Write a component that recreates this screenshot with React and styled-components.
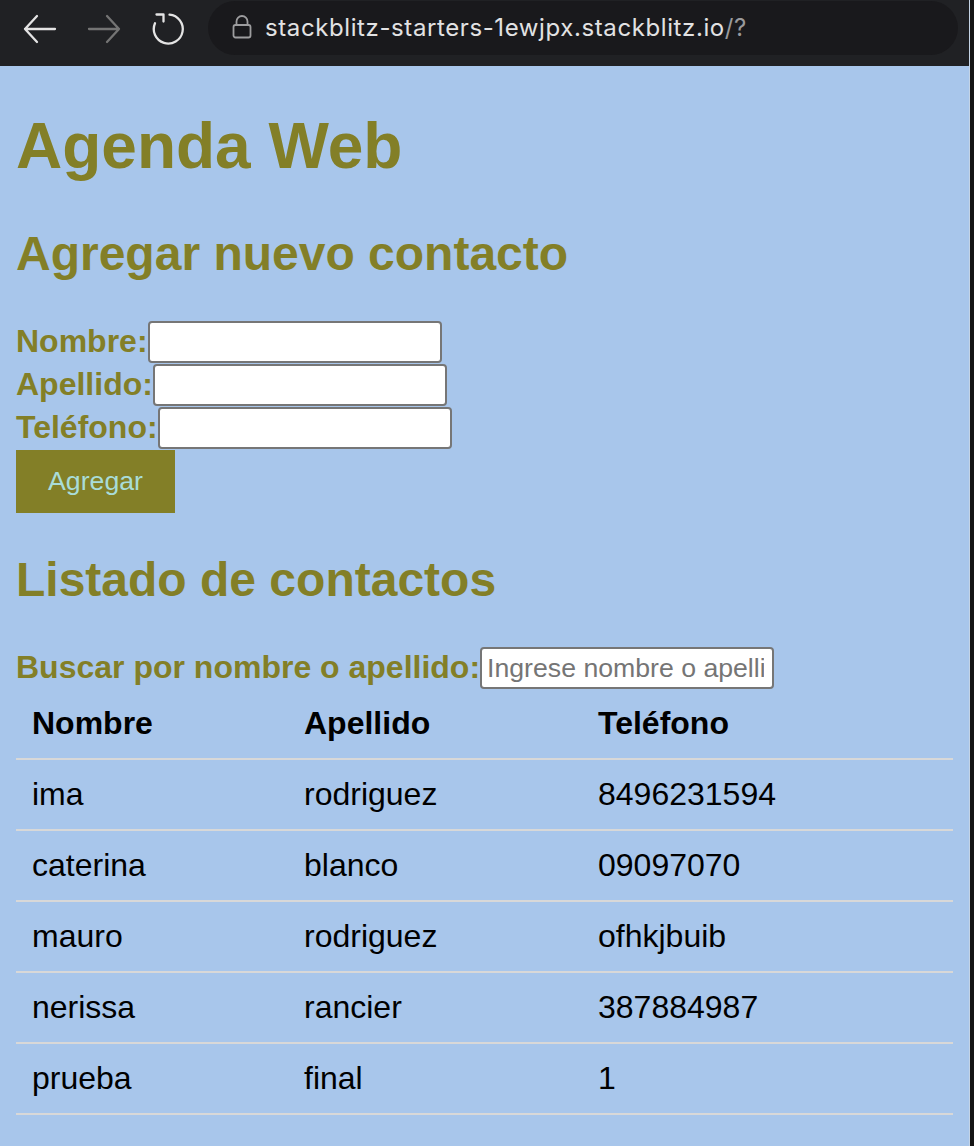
import React from "react";
import styled, { createGlobalStyle } from "styled-components";

const contacts = [
  { nombre: "ima", apellido: "rodriguez", telefono: "8496231594" },
  { nombre: "caterina", apellido: "blanco", telefono: "09097070" },
  { nombre: "mauro", apellido: "rodriguez", telefono: "ofhkjbuib" },
  { nombre: "nerissa", apellido: "rancier", telefono: "387884987" },
  { nombre: "prueba", apellido: "final", telefono: "1" },
];

const OLIVE = "#837f27";

export default function App() {
  return (
    <>
      <GlobalStyle />
      <Window>
        <Main>
          <TopBar>
            <NavIcon viewBox="0 0 32 32" $left={24}>
              <path d="M31 16H1M1 16L13 3M1 16L13 29" stroke="#e4e4e4" />
            </NavIcon>
            <NavIcon viewBox="0 0 32 32" $left={32}>
              <path d="M1 16H31M31 16L19 3M31 16L19 29" stroke="#747474" />
            </NavIcon>
            <NavIcon viewBox="0 0 32 32" $left={32}>
              <path
                d="M17.5 1.6A14.5 14.5 0 1 1 3 10.2"
                stroke="#e4e4e4"
                fill="none"
              />
              <path d="M4.5 1.5H11.5V8.5" stroke="#e4e4e4" fill="none" />
            </NavIcon>
            <UrlPill>
              <LockIcon viewBox="0 0 20 24">
                <path d="M4.5 10V6.5a5.5 5.5 0 0 1 11 0V10" />
                <rect x="1.5" y="10" width="17" height="12.5" rx="2" />
              </LockIcon>
              <UrlText>
                stackblitz-starters-1ewjpx.stackblitz.io<UrlPath>/?</UrlPath>
              </UrlText>
            </UrlPill>
          </TopBar>
          <Page>
            <Title>Agenda Web</Title>
            <SubTitle>Agregar nuevo contacto</SubTitle>
            <form onSubmit={(e) => e.preventDefault()}>
              <FieldRow>
                <FieldLabel>Nombre:</FieldLabel>
                <TextInput type="text" />
              </FieldRow>
              <FieldRow>
                <FieldLabel>Apellido:</FieldLabel>
                <TextInput type="text" />
              </FieldRow>
              <FieldRow>
                <FieldLabel>Teléfono:</FieldLabel>
                <TextInput type="text" />
              </FieldRow>
              <AddButton type="submit">Agregar</AddButton>
            </form>
            <SubTitle>Listado de contactos</SubTitle>
            <FieldRow $height={42}>
              <FieldLabel>Buscar por nombre o apellido:</FieldLabel>
              <TextInput type="text" placeholder="Ingrese nombre o apellido" />
            </FieldRow>
            <Table>
              <thead>
                <tr>
                  <HeadCell $width={272}>Nombre</HeadCell>
                  <HeadCell $width={294}>Apellido</HeadCell>
                  <HeadCell>Teléfono</HeadCell>
                </tr>
              </thead>
              <tbody>
                {contacts.map((c, i) => (
                  <tr key={i}>
                    <Cell>{c.nombre}</Cell>
                    <Cell>{c.apellido}</Cell>
                    <Cell>{c.telefono}</Cell>
                  </tr>
                ))}
              </tbody>
            </Table>
          </Page>
        </Main>
        <Edge />
      </Window>
    </>
  );
}

const GlobalStyle = createGlobalStyle`
  html, body {
    margin: 0;
    padding: 0;
    background: #a8c6eb;
  }
  * {
    box-sizing: border-box;
  }
`;

const Window = styled.div`
  display: flex;
  width: 974px;
  min-height: 1146px;
`;

const Main = styled.div`
  flex: 1;
  min-width: 0;
  display: flex;
  flex-direction: column;
  background: #a8c6eb;
`;

const Edge = styled.div`
  width: 5px;
  flex-shrink: 0;
  border-left: 1px solid #c4d4e6;
  background: #141414;
`;

const TopBar = styled.div`
  height: 66px;
  background: #202124;
  display: flex;
  align-items: flex-start;
`;

const NavIcon = styled.svg`
  width: 32px;
  height: 32px;
  margin-left: ${(p) => p.$left}px;
  margin-top: 13px;
  flex-shrink: 0;
  stroke-width: 2.3;
  stroke-linecap: round;
  stroke-linejoin: round;
  fill: none;
  overflow: visible;
`;

const UrlPill = styled.div`
  margin-left: 24px;
  width: 750px;
  flex-shrink: 0;
  height: 54px;
  margin-top: 1px;
  border-radius: 27px;
  background: #19191c;
  display: flex;
  align-items: center;
  padding-left: 24px;
`;

const LockIcon = styled.svg`
  width: 20px;
  height: 24px;
  fill: none;
  stroke: #9d9d9f;
  stroke-width: 1.8;
  margin-top: -2px;
`;

const UrlText = styled.span`
  margin-left: 13px;
  font-family: Inter, "Noto Sans", sans-serif;
  font-size: 24px;
  color: #e2e2e3;
  letter-spacing: 0.6px;
  margin-top: -2px;
`;

const UrlPath = styled.span`
  color: #9a9a9c;
`;

const Page = styled.div`
  padding: 0 16px 30px;
  font-family: "Liberation Sans", Arial, sans-serif;
  display: flow-root;
`;

const Title = styled.h1`
  font-size: 64px;
  font-weight: bold;
  color: ${OLIVE};
  margin: 42.88px 0;
`;

const SubTitle = styled.h2`
  font-size: 48px;
  font-weight: bold;
  color: ${OLIVE};
  margin: 39.84px 0;
`;

const FieldRow = styled.div`
  display: flex;
  align-items: flex-start;
  height: ${(p) => p.$height || 43}px;
`;

const FieldLabel = styled.label`
  font-size: 32px;
  line-height: 40px;
  font-weight: bold;
  color: ${OLIVE};
  white-space: nowrap;
`;

const TextInput = styled.input`
  width: 294px;
  height: 42px;
  border: 2px solid #767676;
  border-radius: 4px;
  padding: 2px 8px 2px 5px;
  background: #ffffff;
  font-family: "Liberation Sans", Arial, sans-serif;
  font-size: 26.67px;
  color: #000;
  outline: none;
  &::placeholder {
    color: #757575;
  }
`;

const AddButton = styled.button`
  display: block;
  width: 159px;
  height: 63px;
  border: none;
  background: ${OLIVE};
  color: #a9dcd8;
  font-family: "Liberation Sans", Arial, sans-serif;
  font-size: 26.67px;
  padding: 0;
  cursor: pointer;
`;

const Table = styled.table`
  width: 100%;
  border-collapse: collapse;
  table-layout: fixed;
`;

const HeadCell = styled.th`
  width: ${(p) => (p.$width ? `${p.$width}px` : "auto")};
  text-align: left;
  font-size: 32px;
  line-height: 37px;
  font-weight: bold;
  color: #000;
  padding: 16px;
  border-bottom: 2px solid #d8d8d8;
`;

const Cell = styled.td`
  font-size: 32px;
  line-height: 37px;
  color: #000;
  padding: 16px;
  border-bottom: 2px solid #d8d8d8;
`;
